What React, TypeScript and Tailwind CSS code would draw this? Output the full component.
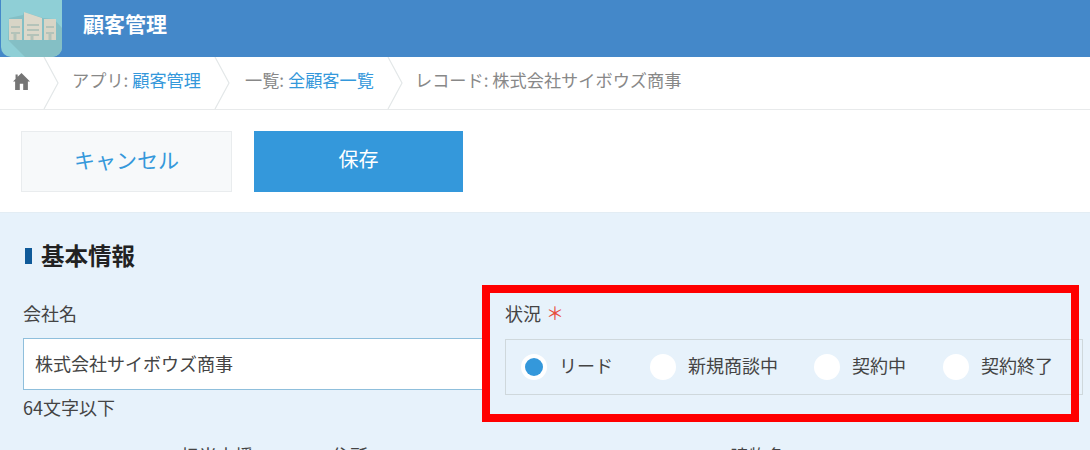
const font = { fontFamily: '"Noto Sans CJK JP", "Open Sans", sans-serif' };

function Chevron() {
  return (
    <svg width="20" height="52" viewBox="0 0 20 52" className="shrink-0" fill="none">
      <path d="M2 0 L16 26 L2 52" stroke="#e3e7e8" strokeWidth="1.2" />
    </svg>
  );
}

function Radio({ label, checked, w }: { label: string; checked?: boolean; w: string }) {
  return (
    <div className={`flex items-center ${w}`}>
      <span className="flex h-[26px] w-[26px] items-center justify-center rounded-full bg-white shrink-0">
        {checked && <span className="h-[18px] w-[18px] rounded-full bg-[#3498db]" />}
      </span>
      <span className="ml-[12px] h-[24px] text-[18px] leading-[20px] text-[#444] whitespace-nowrap">{label}</span>
    </div>
  );
}

export default function App() {
  return (
    <div style={font} className="w-[1090px] h-[450px] overflow-hidden bg-[#e7f2fb] relative">
      <header className="h-[57px] bg-[#4488c9] flex items-center">
        <div className="ml-[1px] h-[57px] w-[61px] rounded-b-[10px] bg-[#8fcfd6] overflow-hidden shrink-0">
          <svg width="61" height="57" viewBox="0 0 61 57">
            <path d="M8 18 L22 15 L23 12 L42 18 L53 19 L61 28 L61 57 L24 57 L7 40 Z" fill="#84bfc5" />
            <path d="M8 19 H21 V40 H8 Z" fill="#d8d5c6" />
            <path d="M23 12 L41 18 V40 H23 Z" fill="#dcd8ca" />
            <path d="M43 19 H55 V40 H43 Z" fill="#d8d5c6" />
            <path d="M10 27 H19 M10 33 H19 M26 25 H38 M26 30 H38 M26 35 H38 M45 27 H53 M45 33 H53" stroke="#b4c3b9" strokeWidth="2" />
            <path d="M14 33 V40 M31 35 V40 M49 33 V40" stroke="#b4c3b9" strokeWidth="3" />
          </svg>
        </div>
        <span className="ml-[21px] text-[21px] font-bold text-white leading-none mb-[11px]">顧客管理</span>
      </header>

      <nav className="h-[53px] bg-white flex items-center text-[17.2px] text-[#888] border-b border-[#e8eaeb]">
        <div className="w-[42px] flex pl-[13px] pb-[3px] shrink-0">
          <svg width="17" height="17" viewBox="0 0 20 18" preserveAspectRatio="none" fill="#757575">
            <path d="M10 0 L20 9 L17.5 9 L17.5 18 L12 18 L12 11.5 L8 11.5 L8 18 L2.5 18 L2.5 9 L0 9 L3 6.3 L3 1.5 L5.5 1.5 L5.5 4 Z" />
          </svg>
        </div>
        <Chevron />
        <span className="ml-[10px] mb-[6px] whitespace-nowrap">アプリ: <span className="text-[#3498db]">顧客管理</span></span>
        <span className="ml-[12px]"><Chevron /></span>
        <span className="ml-[12px] mb-[6px] whitespace-nowrap">一覧: <span className="text-[#3498db]">全顧客一覧</span></span>
        <span className="ml-[12px]"><Chevron /></span>
        <span className="ml-[9px] mb-[6px] whitespace-nowrap">レコード: 株式会社サイボウズ商事</span>
      </nav>

      <div className="h-[103px] bg-white flex items-start pt-[21px] pl-[21px] border-b border-[#e3edf4]">
        <div className="h-[61px] w-[211px] flex items-center justify-center pb-[4px] bg-[#f7f9fa] border border-[#e9ecee] text-[21px] text-[#3498db]">キャンセル</div>
        <div className="ml-[22px] h-[61px] w-[209px] flex items-center justify-center pb-[5px] bg-[#3498db] text-[20px] text-white">保存</div>
      </div>

      <main className="relative pl-[23px]">
        <div className="flex items-center pl-[2px] pt-[29px]">
          <span className="h-[16px] w-[7px] bg-[#0f5a99]" />
          <h2 className="ml-[9px] mb-[2px] text-[23.5px] font-bold text-[#222] leading-[26px]">基本情報</h2>
        </div>
        <div className="flex pt-[32px]">
          <section className="w-[462px] shrink-0">
            <div className="h-[24px] text-[18px] leading-[22px] text-[#444]">会社名</div>
            <div className="mt-[12px] h-[52px] flex items-center bg-white border border-[#8fbfdc] pl-[11px] pb-[2px] text-[18px] text-[#444]">株式会社サイボウズ商事</div>
            <div className="mt-[6px] h-[24px] text-[18px] leading-[22px] text-[#444]">64文字以下</div>
          </section>
          <section>
            <div className="flex items-start h-[24px] text-[18px] leading-[22px] text-[#444] pl-[20px]">
              状況<span className="relative -top-[1px] ml-[5px] text-[18px] leading-[22px] text-[#e74c3c]">＊</span>
            </div>
            <div className="ml-[20px] mt-[13px] h-[56px] w-[578px] flex items-center border border-[#cfd8dc] pl-[15px]">
              <Radio label="リード" checked w="w-[129px]" />
              <Radio label="新規商談中" w="w-[164px]" />
              <Radio label="契約中" w="w-[129px]" />
              <Radio label="契約終了" w="w-[130px]" />
            </div>
          </section>
        </div>
        <div className="flex text-[18px] leading-[24px] text-[#444] mt-[23px] whitespace-nowrap">
          <span className="ml-[158px]">担当支援</span>
          <span className="ml-[79px]">住所</span>
          <span className="ml-[363px]">建物名</span>
        </div>
      </main>

      <div className="absolute left-[482px] top-[285px] w-[597px] h-[137px] border-[8px] border-[#ff0000]" />
    </div>
  );
}
